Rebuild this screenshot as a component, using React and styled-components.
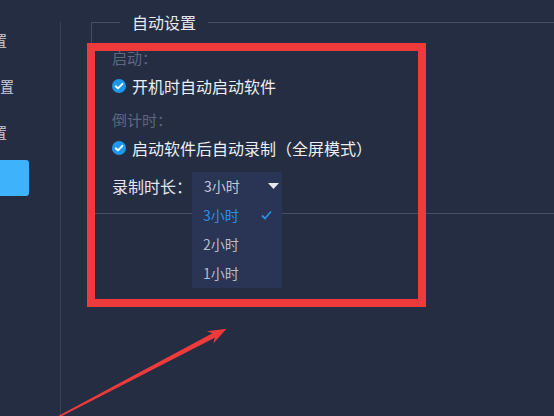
import React from "react";
import styled, { createGlobalStyle } from "styled-components";

const Global = createGlobalStyle`
  html, body {
    margin: 0;
    padding: 0;
    background: #252d43;
    overflow: hidden;
  }
  body {
    font-family: "Noto Sans CJK SC", "Noto Sans", sans-serif;
  }
`;

const Root = styled.div`
  position: relative;
  display: flex;
  width: 554px;
  height: 416px;
  overflow: hidden;
  background: #252d43;
`;

const Sidebar = styled.nav`
  flex: none;
  width: 162px;
  margin-left: -102px;
  padding-top: 22px;
  display: flex;
  flex-direction: column;
  align-items: center;
  gap: 10px;
  box-sizing: border-box;
`;

const NavItem = styled.div`
  width: 100px;
  height: 36px;
  border-radius: 3px;
  display: flex;
  align-items: center;
  justify-content: center;
  font-size: 14px;
  line-height: 20px;
  white-space: nowrap;
  color: ${(p) => (p.$active ? "#ffffff" : "#c9cdd6")};
  background: ${(p) => (p.$active ? "#3eb2fb" : "transparent")};
`;

const Divider = styled.div`
  flex: none;
  width: 1px;
  margin-top: 22px;
  background: #384259;
`;

const Main = styled.main`
  flex: 1;
  min-width: 0;
  padding-left: 30px;
`;

const Fieldset = styled.fieldset`
  margin: 10px 0 0 0;
  padding: 14px 0 13px 20px;
  min-width: 0;
  border: 1px solid #464f69;
  border-right: none;
  display: flex;
  flex-direction: column;
  gap: 12px;
`;

const Legend = styled.legend`
  margin-left: 8px;
  padding: 0 12px;
  font-size: 16px;
  line-height: 24px;
  color: #e6e8ee;
`;

const Section = styled.div`
  display: flex;
  flex-direction: column;
  gap: 6px;
`;

const Label = styled.div`
  font-size: 15px;
  line-height: 20px;
  color: #5d6680;
`;

const CheckRow = styled.label`
  display: flex;
  align-items: center;
  gap: 6px;
  font-size: 16px;
  line-height: 24px;
  color: #eceef3;
  white-space: nowrap;
`;

const Row = styled.div`
  display: flex;
  align-items: center;
  height: 28px;
`;

const RowLabel = styled.span`
  font-size: 16px;
  line-height: 24px;
  color: #e3e6ec;
  white-space: nowrap;
`;

const Select = styled.div`
  position: relative;
  width: 90px;
  height: 28px;
  box-sizing: border-box;
  padding: 0 3px 0 12px;
  background: #2a3454;
  display: flex;
  align-items: center;
  justify-content: space-between;
  font-size: 14px;
  line-height: 20px;
  color: #c3c7d1;
`;

const Menu = styled.ul`
  position: absolute;
  left: 0;
  top: 100%;
  width: 100%;
  margin: 0;
  padding: 0 0 1px;
  list-style: none;
  background: #2a3454;
  z-index: 2;
`;

const Option = styled.li`
  height: 29px;
  box-sizing: border-box;
  padding: 0 10px 0 11px;
  display: flex;
  align-items: center;
  justify-content: space-between;
  font-size: 14px;
  line-height: 20px;
  color: ${(p) => (p.$selected ? "#2b8fe2" : "#b7bcc8")};
`;

const RedFrame = styled.div`
  position: absolute;
  left: 87px;
  top: 43px;
  width: 339px;
  height: 264px;
  box-sizing: border-box;
  border: 8px solid #ef3a3b;
  pointer-events: none;
  z-index: 3;
`;

const Overlay = styled.svg`
  position: absolute;
  left: 0;
  top: 0;
  pointer-events: none;
  z-index: 3;
`;

const CheckIcon = () => (
  <svg width="14" height="14" viewBox="0 0 14 14">
    <circle cx="7" cy="7" r="7" fill="#1b98ea" />
    <path d="M3.7 7.3 L6 9.4 L10.4 4.8" fill="none" stroke="#fff" strokeWidth="1.9" strokeLinecap="round" strokeLinejoin="round" />
  </svg>
);

const Caret = () => (
  <svg width="11" height="6" viewBox="0 0 11 6">
    <polygon points="0,0 11,0 5.5,6" fill="#e6e8ee" />
  </svg>
);

const Tick = () => (
  <svg width="11" height="10" viewBox="0 0 11 10">
    <polyline points="1,5.5 4,8.5 10,1.5" fill="none" stroke="#2b8fe2" strokeWidth="1.8" strokeLinejoin="round" />
  </svg>
);

const navItems = [
  { text: "录制设置" },
  { text: "快捷键设置" },
  { text: "水印设置" },
  { text: "自动", active: true },
];

const options = ["3小时", "2小时", "1小时"];

export default function App() {
  return (
    <Root>
      <Global />
      <Sidebar>
        {navItems.map((n) => (
          <NavItem key={n.text} $active={n.active}>
            {n.text}
          </NavItem>
        ))}
      </Sidebar>
      <Divider />
      <Main>
        <Fieldset>
          <Legend>自动设置</Legend>
          <Section>
            <Label>启动：</Label>
            <CheckRow>
              <CheckIcon />
              开机时自动启动软件
            </CheckRow>
          </Section>
          <Section>
            <Label>倒计时：</Label>
            <CheckRow>
              <CheckIcon />
              启动软件后自动录制（全屏模式）
            </CheckRow>
          </Section>
          <Row>
            <RowLabel>录制时长：</RowLabel>
            <Select>
              <span>3小时</span>
              <Caret />
              <Menu>
                {options.map((o, i) => (
                  <Option key={o} $selected={i === 0}>
                    <span>{o}</span>
                    {i === 0 && <Tick />}
                  </Option>
                ))}
              </Menu>
            </Select>
          </Row>
        </Fieldset>
      </Main>
      <RedFrame />
      <Overlay width="554" height="416" viewBox="0 0 554 416">
        <polygon
          points="55.6,417.4 212.4,333.3 206.9,331.2 226.5,328.8 213.3,343.6 214.8,337.7 56.6,418.8"
          fill="#ef3a3b"
        />
      </Overlay>
    </Root>
  );
}
